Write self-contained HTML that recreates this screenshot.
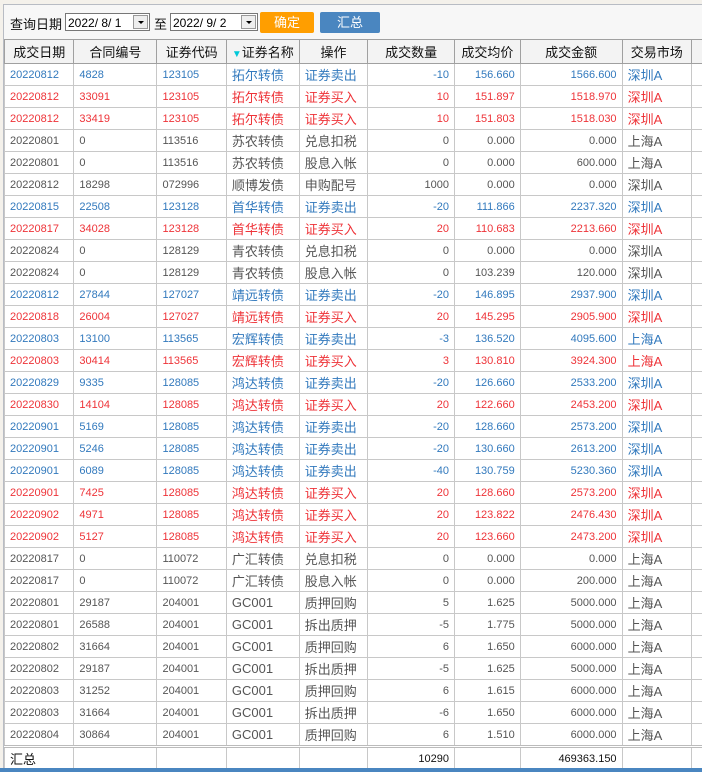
<!DOCTYPE html><html><head><meta charset="utf-8"><style>
body{margin:0;width:702px;height:772px;background:#f4f1eb;overflow:hidden;font-family:"Liberation Sans","Noto Sans CJK SC",sans-serif;position:relative}
#p{position:absolute;left:3px;top:4px;width:699px;height:764px;background:#fff;border-left:1px solid #b8bcc4;border-top:1px solid #b8bcc4}
#bar{position:absolute;left:0;top:0;width:699px;height:34px;background:#f7f7f7}
.l{position:absolute;top:9px;font-size:13px;color:#111}
.dt{position:absolute;top:8px;height:18px;border:1px solid #777;background:#fff;font-size:12px;line-height:18px;padding-left:2px;box-sizing:border-box}
.dt b{position:absolute;right:1px;top:1px;width:15px;height:14px;background:#eee;border:1px solid #999;box-sizing:border-box}
.dt b:after{content:"";position:absolute;left:4px;top:5px;border-left:3px solid transparent;border-right:3px solid transparent;border-top:3px solid #000}
.bt{position:absolute;top:7px;height:21px;color:#fff;font-size:13px;text-align:center;line-height:21px;border-radius:2px}
table{position:absolute;left:0;top:34px;border-collapse:collapse;table-layout:fixed;font-size:11px}
td,th{height:21px;border:1px solid #c8c8c8;padding:0 5px;white-space:nowrap;overflow:hidden}
th{font-weight:normal;font-size:13px;background:#f3f3f3;height:23px;border-color:#a0a0a0;color:#111}
td{font-size:11px}
td:nth-child(4),td:nth-child(5),td:nth-child(9){font-size:13px}
td:nth-child(6),td:nth-child(7),td:nth-child(8){text-align:right}
.b td{color:#3279bd}.r td{color:#ee3338}.g td{color:#555}
tr.f td{border-top:3px double #bbb;color:#111}
#bl{position:absolute;left:0;top:768px;width:702px;height:4px;background:#4a86c0}
</style></head><body><div id="p">
<div id="bar">
<span class="l" style="left:6px">查询日期</span>
<div class="dt" style="left:61px;width:85px">2022/ 8/ 1<b></b></div>
<span class="l" style="left:150px">至</span>
<div class="dt" style="left:166px;width:88px">2022/ 9/ 2<b></b></div>
<div class="bt" style="left:256px;width:54px;background:#ff9e00">确定</div>
<div class="bt" style="left:316px;width:60px;background:#4a86c0">汇总</div>
</div>
<table>
<colgroup><col style="width:70px"><col style="width:85px"><col style="width:70px"><col style="width:70px"><col style="width:69px"><col style="width:89px"><col style="width:66px"><col style="width:105px"><col style="width:70px"><col style="width:10px"></colgroup>
<tr><th>成交日期</th><th>合同编号</th><th>证券代码</th><th><span style="color:#00c8d8;font-size:10px">▼</span>证券名称</th><th>操作</th><th>成交数量</th><th>成交均价</th><th>成交金额</th><th>交易市场</th><th></th></tr>
<tr class="b"><td>20220812</td><td>4828</td><td>123105</td><td>拓尔转债</td><td>证券卖出</td><td>-10</td><td>156.660</td><td>1566.600</td><td>深圳A</td><td></td></tr>
<tr class="r"><td>20220812</td><td>33091</td><td>123105</td><td>拓尔转债</td><td>证券买入</td><td>10</td><td>151.897</td><td>1518.970</td><td>深圳A</td><td></td></tr>
<tr class="r"><td>20220812</td><td>33419</td><td>123105</td><td>拓尔转债</td><td>证券买入</td><td>10</td><td>151.803</td><td>1518.030</td><td>深圳A</td><td></td></tr>
<tr class="g"><td>20220801</td><td>0</td><td>113516</td><td>苏农转债</td><td>兑息扣税</td><td>0</td><td>0.000</td><td>0.000</td><td>上海A</td><td></td></tr>
<tr class="g"><td>20220801</td><td>0</td><td>113516</td><td>苏农转债</td><td>股息入帐</td><td>0</td><td>0.000</td><td>600.000</td><td>上海A</td><td></td></tr>
<tr class="g"><td>20220812</td><td>18298</td><td>072996</td><td>顺博发债</td><td>申购配号</td><td>1000</td><td>0.000</td><td>0.000</td><td>深圳A</td><td></td></tr>
<tr class="b"><td>20220815</td><td>22508</td><td>123128</td><td>首华转债</td><td>证券卖出</td><td>-20</td><td>111.866</td><td>2237.320</td><td>深圳A</td><td></td></tr>
<tr class="r"><td>20220817</td><td>34028</td><td>123128</td><td>首华转债</td><td>证券买入</td><td>20</td><td>110.683</td><td>2213.660</td><td>深圳A</td><td></td></tr>
<tr class="g"><td>20220824</td><td>0</td><td>128129</td><td>青农转债</td><td>兑息扣税</td><td>0</td><td>0.000</td><td>0.000</td><td>深圳A</td><td></td></tr>
<tr class="g"><td>20220824</td><td>0</td><td>128129</td><td>青农转债</td><td>股息入帐</td><td>0</td><td>103.239</td><td>120.000</td><td>深圳A</td><td></td></tr>
<tr class="b"><td>20220812</td><td>27844</td><td>127027</td><td>靖远转债</td><td>证券卖出</td><td>-20</td><td>146.895</td><td>2937.900</td><td>深圳A</td><td></td></tr>
<tr class="r"><td>20220818</td><td>26004</td><td>127027</td><td>靖远转债</td><td>证券买入</td><td>20</td><td>145.295</td><td>2905.900</td><td>深圳A</td><td></td></tr>
<tr class="b"><td>20220803</td><td>13100</td><td>113565</td><td>宏辉转债</td><td>证券卖出</td><td>-3</td><td>136.520</td><td>4095.600</td><td>上海A</td><td></td></tr>
<tr class="r"><td>20220803</td><td>30414</td><td>113565</td><td>宏辉转债</td><td>证券买入</td><td>3</td><td>130.810</td><td>3924.300</td><td>上海A</td><td></td></tr>
<tr class="b"><td>20220829</td><td>9335</td><td>128085</td><td>鸿达转债</td><td>证券卖出</td><td>-20</td><td>126.660</td><td>2533.200</td><td>深圳A</td><td></td></tr>
<tr class="r"><td>20220830</td><td>14104</td><td>128085</td><td>鸿达转债</td><td>证券买入</td><td>20</td><td>122.660</td><td>2453.200</td><td>深圳A</td><td></td></tr>
<tr class="b"><td>20220901</td><td>5169</td><td>128085</td><td>鸿达转债</td><td>证券卖出</td><td>-20</td><td>128.660</td><td>2573.200</td><td>深圳A</td><td></td></tr>
<tr class="b"><td>20220901</td><td>5246</td><td>128085</td><td>鸿达转债</td><td>证券卖出</td><td>-20</td><td>130.660</td><td>2613.200</td><td>深圳A</td><td></td></tr>
<tr class="b"><td>20220901</td><td>6089</td><td>128085</td><td>鸿达转债</td><td>证券卖出</td><td>-40</td><td>130.759</td><td>5230.360</td><td>深圳A</td><td></td></tr>
<tr class="r"><td>20220901</td><td>7425</td><td>128085</td><td>鸿达转债</td><td>证券买入</td><td>20</td><td>128.660</td><td>2573.200</td><td>深圳A</td><td></td></tr>
<tr class="r"><td>20220902</td><td>4971</td><td>128085</td><td>鸿达转债</td><td>证券买入</td><td>20</td><td>123.822</td><td>2476.430</td><td>深圳A</td><td></td></tr>
<tr class="r"><td>20220902</td><td>5127</td><td>128085</td><td>鸿达转债</td><td>证券买入</td><td>20</td><td>123.660</td><td>2473.200</td><td>深圳A</td><td></td></tr>
<tr class="g"><td>20220817</td><td>0</td><td>110072</td><td>广汇转债</td><td>兑息扣税</td><td>0</td><td>0.000</td><td>0.000</td><td>上海A</td><td></td></tr>
<tr class="g"><td>20220817</td><td>0</td><td>110072</td><td>广汇转债</td><td>股息入帐</td><td>0</td><td>0.000</td><td>200.000</td><td>上海A</td><td></td></tr>
<tr class="g"><td>20220801</td><td>29187</td><td>204001</td><td>GC001</td><td>质押回购</td><td>5</td><td>1.625</td><td>5000.000</td><td>上海A</td><td></td></tr>
<tr class="g"><td>20220801</td><td>26588</td><td>204001</td><td>GC001</td><td>拆出质押</td><td>-5</td><td>1.775</td><td>5000.000</td><td>上海A</td><td></td></tr>
<tr class="g"><td>20220802</td><td>31664</td><td>204001</td><td>GC001</td><td>质押回购</td><td>6</td><td>1.650</td><td>6000.000</td><td>上海A</td><td></td></tr>
<tr class="g"><td>20220802</td><td>29187</td><td>204001</td><td>GC001</td><td>拆出质押</td><td>-5</td><td>1.625</td><td>5000.000</td><td>上海A</td><td></td></tr>
<tr class="g"><td>20220803</td><td>31252</td><td>204001</td><td>GC001</td><td>质押回购</td><td>6</td><td>1.615</td><td>6000.000</td><td>上海A</td><td></td></tr>
<tr class="g"><td>20220803</td><td>31664</td><td>204001</td><td>GC001</td><td>拆出质押</td><td>-6</td><td>1.650</td><td>6000.000</td><td>上海A</td><td></td></tr>
<tr class="g"><td>20220804</td><td>30864</td><td>204001</td><td>GC001</td><td>质押回购</td><td>6</td><td>1.510</td><td>6000.000</td><td>上海A</td><td></td></tr>
<tr class="f"><td style="font-size:13px">汇总</td><td></td><td></td><td></td><td></td><td>10290</td><td></td><td>469363.150</td><td></td><td></td></tr>
</table></div><div id="bl"></div></body></html>
